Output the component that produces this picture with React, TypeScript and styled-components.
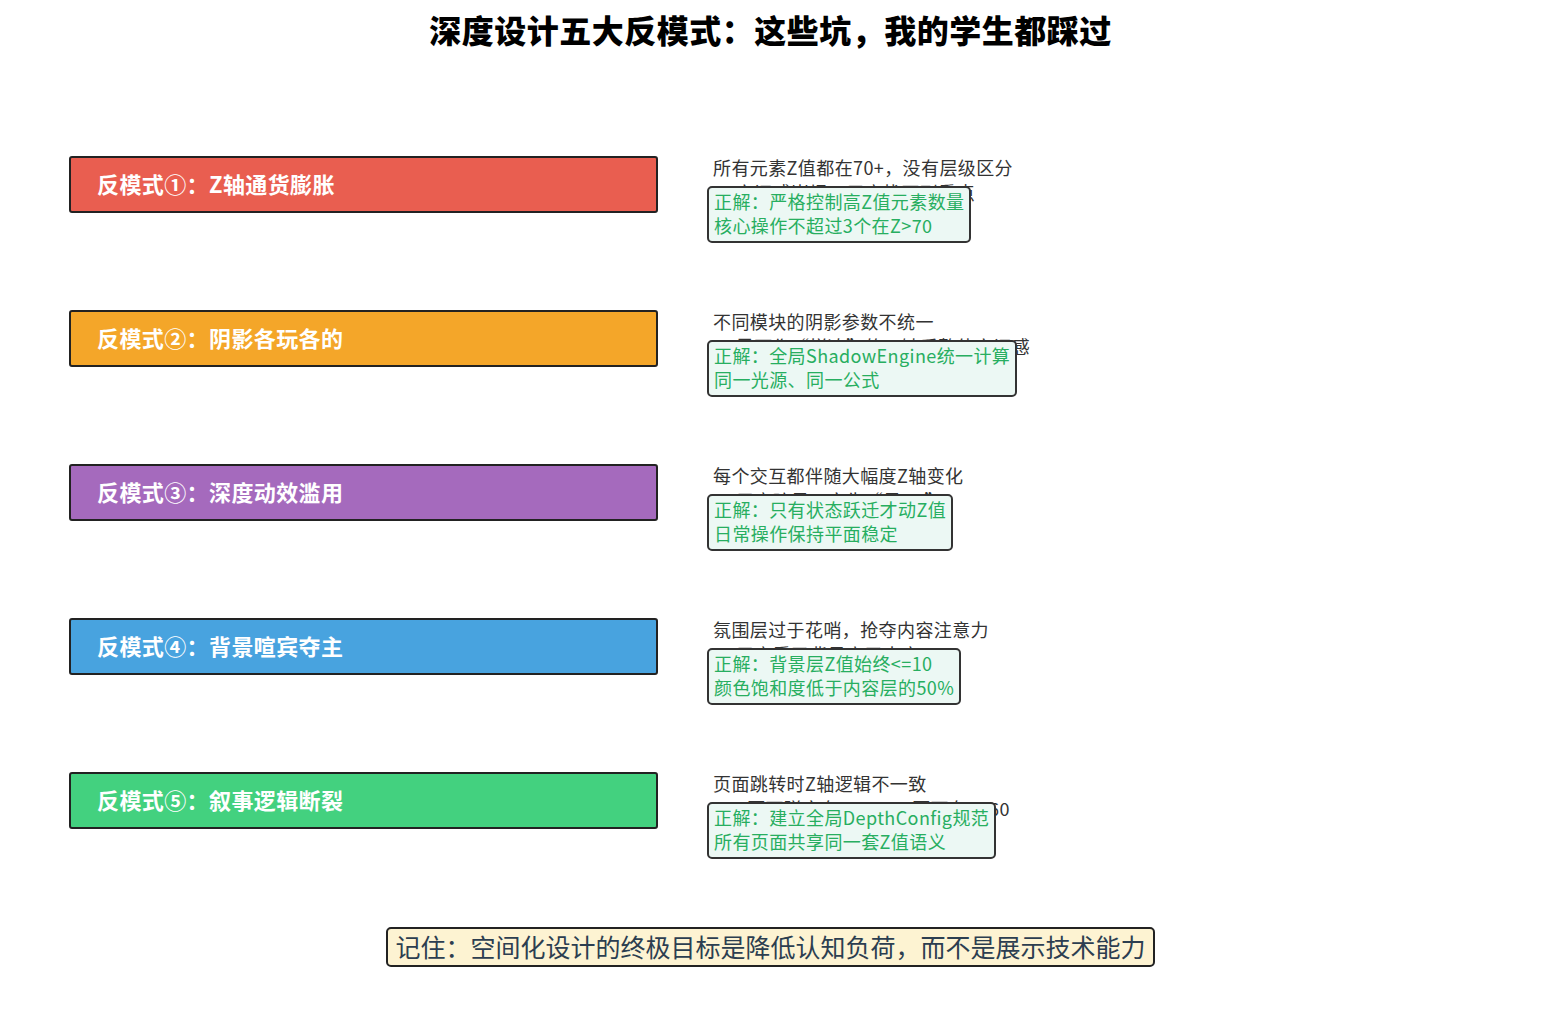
import styled, { createGlobalStyle } from "styled-components";

type Pattern = {
  title: string;
  color: string;
  problem: string;
  effect: string;
  fix: string;
  detail: string;
};

const patterns: Pattern[] = [
  {
    title: "反模式①：Z轴通货膨胀",
    color: "#e95e50",
    problem: "所有元素Z值都在70+，没有层级区分",
    effect: "→ 空间感崩塌，用户找不到重点",
    fix: "正解：严格控制高Z值元素数量",
    detail: "核心操作不超过3个在Z>70",
  },
  {
    title: "反模式②：阴影各玩各的",
    color: "#f4a629",
    problem: "不同模块的阴影参数不统一",
    effect: "→ 界面像“拼凑”的，缺乏整体空间感",
    fix: "正解：全局ShadowEngine统一计算",
    detail: "同一光源、同一公式",
  },
  {
    title: "反模式③：深度动效滥用",
    color: "#a56abd",
    problem: "每个交互都伴随大幅度Z轴变化",
    effect: "→ 用户眩晕，产生“晕3D”",
    fix: "正解：只有状态跃迁才动Z值",
    detail: "日常操作保持平面稳定",
  },
  {
    title: "反模式④：背景喧宾夺主",
    color: "#48a3df",
    problem: "氛围层过于花哨，抢夺内容注意力",
    effect: "→ 用户看了背景忘了内容",
    fix: "正解：背景层Z值始终<=10",
    detail: "颜色饱和度低于内容层的50%",
  },
  {
    title: "反模式⑤：叙事逻辑断裂",
    color: "#43d17f",
    problem: "页面跳转时Z轴逻辑不一致",
    effect: "→ A页面弹窗在Z=90，B页面在Z=60",
    fix: "正解：建立全局DepthConfig规范",
    detail: "所有页面共享同一套Z值语义",
  },
];

const App = () => {
  return (
    <Page>
      <GlobalStyle />
      <Title>深度设计五大反模式：这些坑，我的学生都踩过</Title>
      <Rows>
        {patterns.map((p) => (
          <Row key={p.title}>
            <Bar $color={p.color}>{p.title}</Bar>
            <Notes>
              <Problem>
                {p.problem}
                <br />
                {p.effect}
              </Problem>
              <FixBox>
                {p.fix}
                <br />
                {p.detail}
              </FixBox>
            </Notes>
          </Row>
        ))}
      </Rows>
      <Footer>
        <Remember>记住：空间化设计的终极目标是降低认知负荷，而不是展示技术能力</Remember>
      </Footer>
    </Page>
  );
};

export default App;

const GlobalStyle = createGlobalStyle`
  html, body {
    margin: 0;
    padding: 0;
    background: #ffffff;
  }
  body {
    font-family: "Noto Sans CJK SC", "Noto Sans", sans-serif;
  }
`;

const Page = styled.div`
  width: 1541px;
  height: 1021px;
  background: #ffffff;
  display: flex;
  flex-direction: column;
`;

const Title = styled.h1`
  margin: 0;
  padding-top: 9px;
  height: 40px;
  line-height: 40px;
  text-align: center;
  font-size: 32px;
  font-weight: 900;
  color: #000000;
  letter-spacing: 0.5px;
`;

const Rows = styled.div`
  margin-top: 106px;
  display: flex;
  flex-direction: column;
`;

const Row = styled.div`
  height: 154px;
  display: flex;
  align-items: flex-start;
  padding-left: 69px;
  gap: 49px;
`;

const Bar = styled.div<{ $color: string }>`
  margin-top: 1px;
  box-sizing: border-box;
  width: 589px;
  height: 57px;
  background: ${(p) => p.$color};
  border: 2px solid #222222;
  border-radius: 3px;
  display: flex;
  align-items: center;
  padding-left: 26px;
  padding-bottom: 4px;
  color: #ffffff;
  font-size: 22px;
  font-weight: 700;
  letter-spacing: 0.4px;
`;

const Notes = styled.div`
  display: flex;
  flex-direction: column;
  align-items: flex-start;
`;

const Problem = styled.div`
  padding-left: 6px;
  font-size: 18px;
  line-height: 25px;
  letter-spacing: 0.4px;
  color: #333333;
  white-space: nowrap;
`;

const FixBox = styled.div`
  position: relative;
  margin-top: -19px;
  box-sizing: border-box;
  padding: 1px 5px 4px 5px;
  background: #ecf8f4;
  border: 2px solid #333333;
  border-radius: 5px;
  font-size: 18px;
  line-height: 24px;
  letter-spacing: 0.4px;
  color: #27ae60;
  white-space: nowrap;
`;

const Footer = styled.div`
  margin-top: 2px;
  display: flex;
  justify-content: center;
`;

const Remember = styled.div`
  box-sizing: border-box;
  height: 40px;
  padding: 0 7px 2px;
  display: flex;
  align-items: center;
  background: #fdf3d2;
  border: 2px solid #222222;
  border-radius: 5px;
  font-size: 25px;
  color: #2c3e50;
  white-space: nowrap;
`;
